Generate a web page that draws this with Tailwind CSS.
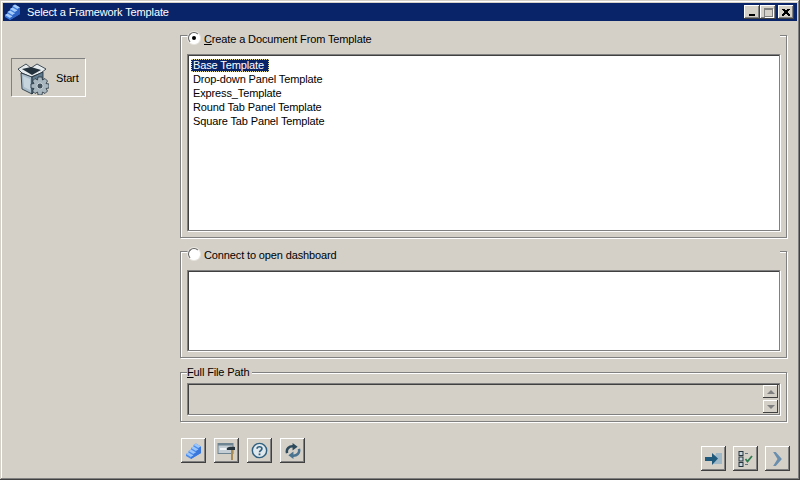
<!DOCTYPE html>
<html>
<head>
<meta charset="utf-8">
<script src="https://cdn.jsdelivr.net/npm/@tailwindcss/browser@4"></script>
</head>
<body class="m-0 overflow-hidden">
<div class="w-[800px] h-[480px] bg-[#d4d0c8] p-[3px] flex flex-col font-['Liberation_Sans',sans-serif] text-[11px] tracking-[-0.13px] leading-[14px] text-black shadow-[inset_-1px_-1px_0_#404040,inset_1px_1px_0_#d4d0c8,inset_-2px_-2px_0_#808080,inset_2px_2px_0_#ffffff]">
  <!-- title bar -->
  <div class="h-[18px] bg-[#0a246a] flex items-center text-white shrink-0">
    <svg class="w-[16px] h-[16px] ml-[2px]" viewBox="0 0 16 16">
      <path d="M0 11 L2.500 9.500 V8 L5 6.500 V5 L7.500 3.500 V2 L10 0.500 L15 3.500 V10 L5 16 L0 13Z" fill="#3f7ee0"/>
      <path d="M0 11 L2.500 9.500 L7.500 12.500 L5 14Z M2.500 8 L5 6.500 L10 9.500 L7.500 11Z M5 5 L7.500 3.500 L12.500 6.500 L10 8Z M7.500 2 L10 0.500 L15 3.500 L12.500 5Z" fill="#a8cdfb"/>
      <path d="M5 16 L15 10 V3.500 L12.500 5 V6.500 L10 8 V9.500 L7.500 11 V12.500 L5 14Z" fill="#2f63c4"/>
    </svg>
    <span class="ml-[6px]">Select a Framework Template</span>
    <div class="ml-auto flex items-center mr-[3px]">
      <div class="w-[16px] h-[14px] bg-[#d4d0c8] shadow-[inset_-1px_-1px_0_#404040,inset_1px_1px_0_#ffffff,inset_-2px_-2px_0_#808080] flex items-end justify-center pb-[3px]"><div class="w-[6px] h-[2px] bg-black mr-[1px]"></div></div>
      <div class="w-[16px] h-[14px] bg-[#d4d0c8] shadow-[inset_-1px_-1px_0_#404040,inset_1px_1px_0_#ffffff,inset_-2px_-2px_0_#808080] flex items-center justify-center"><div class="w-[9px] h-[9px] border border-[#808080] border-t-2 shadow-[1px_1px_0_#ffffff]"></div></div>
      <div class="w-[16px] h-[14px] ml-[2px] bg-[#d4d0c8] shadow-[inset_-1px_-1px_0_#404040,inset_1px_1px_0_#ffffff,inset_-2px_-2px_0_#808080] flex items-center justify-center"><svg class="w-[8px] h-[7px]" viewBox="0 0 8 7"><path d="M0.5 0 L7.5 7 M7.5 0 L0.5 7 M1.5 0 L8 6.5 M6.5 0 L0 6.5" stroke="#000" stroke-width="1" shape-rendering="crispEdges"/></svg></div>
    </div>
  </div>
  <!-- body -->
  <div class="flex flex-1 min-h-0">
    <!-- left -->
    <div class="w-[177px] shrink-0 pl-[8px] pt-[37px]">
      <div class="w-[74px] h-[38px] flex items-center border-t border-l border-[#808080] shadow-[1px_1px_0_#ffffff]">
        <svg class="w-[32px] h-[32px] ml-[5px] mt-[2px]" viewBox="0 0 32 32">
          <path d="M1 6 L9 1 L14 5 L20 1 L29 6 L24 10 L14 14 L5 10Z" fill="#e6ebee" stroke="#1c2a33" stroke-width="0.8"/>
          <path d="M5 6 L14 4 L24 7 L15 12Z" fill="#22313c"/>
          <path d="M4 10 L15 14 L15 31 L5 26Z" fill="#a9bcc9" stroke="#1c2a33" stroke-width="0.8"/>
          <path d="M15 14 L26 9 L26 18 L15 31Z" fill="#5f7a8d" stroke="#1c2a33" stroke-width="0.8"/>
          <path d="M6 13 L13 16 L13 27 L7 24Z" fill="#c6d4dd"/>
          <g transform="translate(23 23)">
            <path d="M-2 -9 H2 L2.500 -6 L5 -7.500 L7.500 -5 L6 -2.500 L9 -2 V2 L6 2.500 L7.500 5 L5 7.500 L2.500 6 L2 9 H-2 L-2.500 6 L-5 7.500 L-7.500 5 L-6 2.500 L-9 2 V-2 L-6 -2.500 L-7.500 -5 L-5 -7.500 L-2.500 -6Z" fill="#a7b6bf" stroke="#27343c" stroke-width="0.8"/>
            <circle r="3" fill="#43525c" stroke="#dbe3e8" stroke-width="0.8"/>
          </g>
        </svg>
        <span class="ml-[7px]">Start</span>
      </div>
    </div>
    <!-- right -->
    <div class="w-[610px] shrink-0 pt-[14px] flex flex-col">
      <!-- group 1 -->
      <div class="relative w-[607px] h-[203px] px-[6px] pt-[18px] pb-[6px] border border-[#808080] shadow-[inset_1px_1px_0_#ffffff,1px_1px_0_#ffffff]">
        <div class="absolute left-[7px] top-[-6px] w-[592px] bg-[#d4d0c8] flex items-center h-[15px]">
          <div class="w-[12px] h-[12px] rounded-full bg-white border border-[#606060] border-b-white border-r-white shadow-[0_0_0_1px_#e8e6e0] flex items-center justify-center"><div class="w-[4px] h-[4px] rounded-full bg-black"></div></div>
          <span class="ml-[4px] mt-[2px]"><u>C</u>reate a Document From Template</span>
        </div>
        <div class="h-full bg-white border border-[#808080] shadow-[inset_1px_1px_0_#404040,1px_1px_0_#ffffff] pl-[3px] pt-[4px]">
          <div class="w-[78px] h-[13px] leading-[13px] bg-[#0a246a] text-white outline-1 outline-dotted outline-[#e8e0a0] -outline-offset-1 px-[2px]">Base Template</div>
          <div class="px-[2px]">Drop-down Panel Template</div>
          <div class="px-[2px]">Express_Template</div>
          <div class="px-[2px]">Round Tab Panel Template</div>
          <div class="px-[2px]">Square Tab Panel Template</div>
        </div>
      </div>
      <!-- group 2 -->
      <div class="relative w-[607px] h-[107px] mt-[13px] px-[6px] pt-[18px] pb-[6px] border border-[#808080] shadow-[inset_1px_1px_0_#ffffff,1px_1px_0_#ffffff]">
        <div class="absolute left-[7px] top-[-6px] w-[592px] bg-[#d4d0c8] flex items-center h-[15px]">
          <div class="w-[12px] h-[12px] rounded-full bg-white border border-[#606060] border-b-white border-r-white shadow-[0_0_0_1px_#e8e6e0]"></div>
          <span class="ml-[4px] mt-[2px]">Connect to open dashboard</span>
        </div>
        <div class="h-full bg-white border border-[#808080] shadow-[inset_1px_1px_0_#404040,1px_1px_0_#ffffff]"></div>
      </div>
      <!-- group 3 -->
      <div class="relative w-[607px] h-[50px] mt-[14px] px-[6px] pt-[10px] pb-[6px] border border-[#808080] shadow-[inset_1px_1px_0_#ffffff,1px_1px_0_#ffffff]">
        <div class="absolute left-[6px] top-[-8px] bg-[#d4d0c8] h-[14px] pr-[3px]"><u>F</u>ull File Path</div>
        <div class="h-full border border-[#808080] shadow-[inset_1px_1px_0_#404040,1px_1px_0_#ffffff] flex justify-end">
          <div class="flex flex-col w-[15px] mr-[1px] mt-[1px] gap-[2px]">
            <div class="h-[13px] shadow-[inset_-1px_-1px_0_#404040,inset_1px_1px_0_#ffffff] flex items-center justify-center"><div class="w-0 h-0 border-x-[4px] border-x-transparent border-b-[4px] border-b-[#808080]"></div></div>
            <div class="h-[13px] shadow-[inset_-1px_-1px_0_#404040,inset_1px_1px_0_#ffffff] flex items-center justify-center"><div class="w-0 h-0 border-x-[4px] border-x-transparent border-t-[4px] border-t-[#808080]"></div></div>
          </div>
        </div>
      </div>
      <!-- bottom toolbars -->
      <div class="flex justify-between items-start mt-[16px] ml-[1px]">
        <div class="flex gap-[8px]">
          <div class="w-[25px] h-[25px] flex items-center justify-center shadow-[inset_-1px_-1px_0_#404040,inset_1px_1px_0_#ffffff,inset_-2px_-2px_0_#808080]">
            <svg class="w-[16px] h-[16px]" viewBox="0 0 16 16">
              <path d="M0 11 L2.500 9.500 V8 L5 6.500 V5 L7.500 3.500 V2 L10 0.500 L15 3.500 V10 L5 16 L0 13Z" fill="#4a8cee"/>
              <path d="M0 11 L2.500 9.500 L7.500 12.500 L5 14Z M2.500 8 L5 6.500 L10 9.500 L7.500 11Z M5 5 L7.500 3.500 L12.500 6.500 L10 8Z M7.500 2 L10 0.500 L15 3.500 L12.500 5Z" fill="#9cc6fa"/>
              <path d="M5 16 L15 10 V3.500 L12.500 5 V6.500 L10 8 V9.500 L7.500 11 V12.500 L5 14Z" fill="#3a78dc"/>
            </svg>
          </div>
          <div class="w-[25px] h-[25px] flex items-center justify-center shadow-[inset_-1px_-1px_0_#404040,inset_1px_1px_0_#ffffff,inset_-2px_-2px_0_#808080]">
            <svg class="w-[20px] h-[18px]" viewBox="0 0 20 18"><rect x="1" y="1.500" width="15" height="10" fill="#c5ced4" stroke="#6f8492"/><rect x="1" y="1.500" width="15" height="2" fill="#6f8492"/><rect x="3" y="6" width="6" height="2" fill="#eef2f4"/><path d="M15 6 V18" stroke="#a88a55" stroke-width="2"/><path d="M10 6 C11 4.500 16 4.500 18 5 V8 H10Z" fill="#26343d"/></svg>
          </div>
          <div class="w-[25px] h-[25px] flex items-center justify-center shadow-[inset_-1px_-1px_0_#404040,inset_1px_1px_0_#ffffff,inset_-2px_-2px_0_#808080]">
            <svg class="w-[17px] h-[17px]" viewBox="0 0 19 19"><circle cx="9.500" cy="9.500" r="8" fill="#dfe8ed" stroke="#2f5f7f" stroke-width="1.600"/><path d="M6.800 7.500 C6.800 4.500 12.200 4.500 12.200 7.500 C12.200 9.500 9.500 9.500 9.500 11.500" fill="none" stroke="#2f5f7f" stroke-width="1.800"/><rect x="8.500" y="12.800" width="2" height="2" fill="#2f5f7f"/></svg>
          </div>
          <div class="w-[25px] h-[25px] flex items-center justify-center shadow-[inset_-1px_-1px_0_#404040,inset_1px_1px_0_#ffffff,inset_-2px_-2px_0_#808080]">
            <svg class="w-[16px] h-[16px]" viewBox="0 0 19 19"><path d="M2.500 12 C1 7 5 3.500 10 4" fill="none" stroke="#2c4a5c" stroke-width="3"/><path d="M9 0 L15 4.500 L9 9Z" fill="#2c4a5c"/><path d="M16.500 7 C18 12 14 15.500 9 15" fill="none" stroke="#4a7390" stroke-width="3"/><path d="M10 10 L4 14.500 L10 19Z" fill="#4a7390"/></svg>
          </div>
        </div>
        <div class="flex gap-[7px] mt-[8px]">
          <div class="w-[25px] h-[25px] flex items-center justify-center shadow-[inset_-1px_-1px_0_#404040,inset_1px_1px_0_#ffffff,inset_-2px_-2px_0_#808080]">
            <svg class="w-[18px] h-[14px]" viewBox="0 0 18 14"><path d="M11 1 H17 V12 H8Z" fill="#9fb8c8"/><path d="M0 5 H7 V1 L13 6.500 L7 13 V9 H0Z" fill="#1f5a7d"/></svg>
          </div>
          <div class="w-[25px] h-[25px] flex items-center justify-center shadow-[inset_-1px_-1px_0_#404040,inset_1px_1px_0_#ffffff,inset_-2px_-2px_0_#808080]">
            <svg class="w-[16px] h-[16px]" viewBox="0 0 16 16"><rect x="1" y="0.500" width="4" height="4" fill="#c8d4dc" stroke="#26343d"/><rect x="1" y="6" width="4" height="4" fill="#c8d4dc" stroke="#26343d"/><rect x="1" y="11.500" width="4" height="4" fill="#c8d4dc" stroke="#26343d"/><path d="M7 2.500 H10 M7 13.500 H10" stroke="#607480"/><path d="M7.500 8 L9.500 10.500 L14 5" fill="none" stroke="#2f7d4f" stroke-width="1.800"/></svg>
          </div>
          <div class="w-[25px] h-[25px] flex items-center justify-center shadow-[inset_-1px_-1px_0_#404040,inset_1px_1px_0_#ffffff,inset_-2px_-2px_0_#808080]">
            <svg class="w-[9px] h-[14px]" viewBox="0 0 10 16"><path d="M0 0 H3 L10 8 L3 16 H0 L5 8Z" fill="#6a8fae"/></svg>
          </div>
        </div>
      </div>
    </div>
  </div>
</div>
</body>
</html>
